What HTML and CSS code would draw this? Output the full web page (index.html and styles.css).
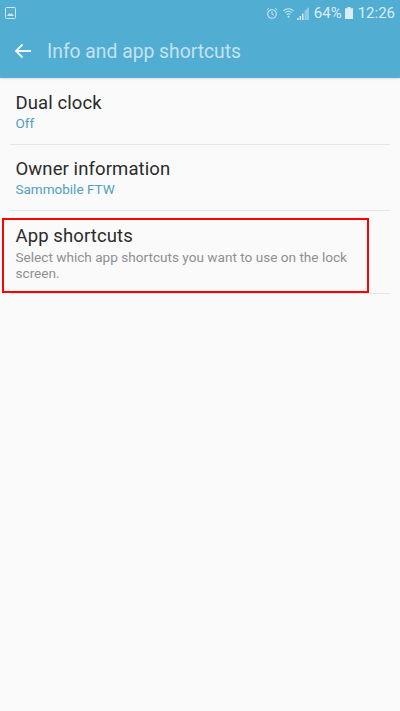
FILE: index.html
```html
<html>
<head>
    <title>Info and app shortcuts</title>
    <link rel="stylesheet" href="styles.css">
</head>
<body>
    <div class="cabecalho">
        <div class="status">
            <svg class="icone-foto" width="11" height="12" viewBox="0 0 11 12">
                <rect x="0.5" y="0.5" width="10" height="11" rx="1" fill="none" stroke="#cfe8f3"/>
                <path d="M2 9l2-3 1.500 1.500 1-1.500 2.500 3z" fill="#cfe8f3"/>
            </svg>
            <div class="status-direita">
                <svg class="icone-alarme" width="12" height="13" viewBox="0 0 12 13">
                    <circle cx="6" cy="7" r="4.300" fill="none" stroke="#cfe8f3" stroke-width="1.100"/>
                    <path d="M6 4.500v2.700l1.800 1M0.800 3l2-1.800M11.200 3l-2-1.800" fill="none" stroke="#cfe8f3" stroke-width="1"/>
                </svg>
                <svg class="icone-wifi" width="11" height="14" viewBox="0 0 13 14">
                    <path d="M0.500 4.500c3.300-3.400 8.700-3.400 12 0M2.500 6.700c2.200-2.200 5.800-2.200 8 0M4.500 8.800c1.100-1 2.900-1 4 0" fill="none" stroke="#cfe8f3" stroke-width="1.200"/>
                    <path d="M6.500 10l1.300 1.500-1.300 1.500-1.300-1.500z" fill="#cfe8f3"/>
                </svg>
                <svg class="icone-sinal" width="12" height="13" viewBox="0 0 12 13">
                    <path d="M0 13v-2h1.500v2zM2.500 13v-4h1.500v4zM5 13v-6.500h1.500v6.500z" fill="#d8edf6"/>
                    <path d="M7.500 13v-9l4.500-4v13z" fill="#8fcbe3"/>
                </svg>
                <span class="percentual">64%</span>
                <svg class="icone-bateria" width="8" height="12" viewBox="0 0 8 12">
                    <path d="M2.500 0h3v1.200h2.500v10.800h-8v-10.800h2.500z" fill="#d8edf6"/>
                </svg>
                <span class="hora">12:26</span>
            </div>
        </div>
        <div class="barra">
            <svg class="voltar" width="18" height="16" viewBox="0 0 18 16">
                <path d="M17 8H2M8.500 1.500L2 8l6.500 6.500" fill="none" stroke="#eef7fb" stroke-width="1.800"/>
            </svg>
            <span class="titulo">Info and app shortcuts</span>
        </div>
    </div>

    <div class="lista">
        <div class="item">
            <div class="item-nome">Dual clock</div>
            <div class="item-valor">Off</div>
        </div>
        <div class="item">
            <div class="item-nome">Owner information</div>
            <div class="item-valor">Sammobile FTW</div>
        </div>
        <div class="item item-atalhos">
            <div class="item-nome">App shortcuts</div>
            <div class="item-texto">Select which app shortcuts you want to use on the lock screen.</div>
            <div class="destaque"></div>
        </div>
    </div>
</body>
</html>
```

FILE: styles.css
```css
body {
    margin: 0;
    height: 711px;
    overflow: hidden;
    background-color: #fafafa;
    font-family: Roboto, "Noto Sans", sans-serif;
}

.cabecalho {
    background-color: #52add3;
    height: 78px;
    box-shadow: 0 1px 2px rgba(0, 0, 0, 0.12);
}

.status {
    height: 26px;
    display: flex;
    align-items: center;
    justify-content: space-between;
    padding: 0 5px;
}

.status-direita {
    display: flex;
    align-items: center;
    color: #d8edf6;
    font-size: 15px;
}

.icone-wifi {
    margin-left: 5px;
}

.icone-sinal {
    margin-left: 3px;
}

.percentual {
    margin-left: 5px;
}

.icone-bateria {
    margin-left: 3px;
}

.hora {
    margin-left: 5px;
}

.barra {
    height: 50px;
    display: flex;
    align-items: center;
    padding-left: 14px;
}

.titulo {
    margin-left: 15px;
    font-size: 19.300px;
    color: #c4e3f1;
}

.lista {
    padding: 1px 10px 0;
}

.item {
    border-bottom: 1px solid #e6e6e6;
    padding: 12px 6px 11px 5.500px;
    height: 66px;
    box-sizing: border-box;
}

.item-nome {
    font-size: 18.500px;
    letter-spacing: 0.1px;
    line-height: 24px;
    color: #2b2b2b;
}

.item-valor {
    font-size: 13.500px;
    line-height: 17px;
    color: #4f9fc2;
}

.item-texto {
    font-size: 13.600px;
    line-height: 16px;
    margin-top: 1px;
    color: #8f8f8f;
    width: 345px;
}

.item-atalhos {
    position: relative;
    height: 83px;
    padding-top: 13px;
}

.destaque {
    position: absolute;
    left: -8px;
    top: 7px;
    width: 363px;
    height: 71px;
    border: 2px solid #ff0000;
}
```
